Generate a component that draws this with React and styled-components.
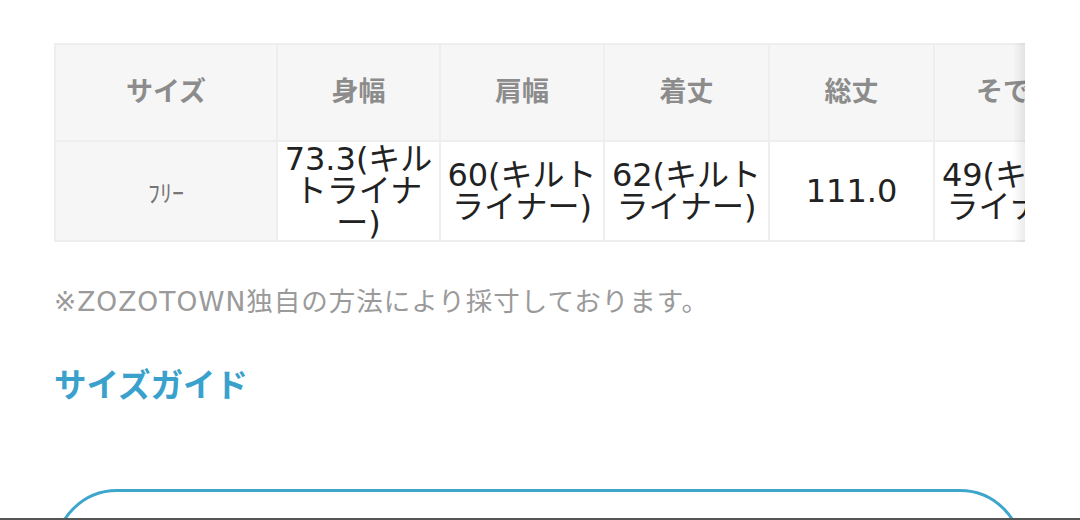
import React from "react";
import styled, { createGlobalStyle } from "styled-components";

const GlobalStyle = createGlobalStyle`
  html, body {
    margin: 0;
    padding: 0;
    background: #fff;
    font-family: "Noto Sans CJK JP", "Noto Sans", sans-serif;
    overflow: hidden;
  }
`;

const Page = styled.div`
  padding: 43px 53px 0 54px;
`;

const ScrollArea = styled.div`
  position: relative;
  width: 971px;
  overflow: hidden;
  &::after {
    content: "";
    position: absolute;
    top: 0;
    right: 0;
    bottom: 0;
    width: 12px;
    background: linear-gradient(to right, rgba(0, 0, 0, 0), rgba(0, 0, 0, 0.08));
  }
`;

const Table = styled.table`
  border-collapse: separate;
  border-spacing: 2px;
  background: #eeeeee;
  table-layout: fixed;
  width: 1046px;
`;

const HeadCell = styled.th`
  width: ${(p) => p.$w}px;
  height: 95px;
  background: #f6f6f6;
  color: #8c8c8c;
  font-size: 27px;
  font-weight: 700;
  text-align: center;
  padding: 0 0 6px;
  box-sizing: border-box;
`;

const SizeCell = styled.td`
  background: #f6f6f6;
  color: #777;
  font-size: 24px;
  text-align: center;
  height: 98px;
  padding: 0;
`;

const ValueCell = styled.td`
  background: #fff;
  color: #222;
  font-family: "DejaVu Sans", "Noto Sans CJK JP", sans-serif;
  font-size: 32px;
  line-height: 32px;
  text-align: center;
  padding: 0 3px;
  word-break: break-all;
`;

const Note = styled.p`
  margin: 42px 0 0;
  color: #9a9a9a;
  font-family: "DejaVu Sans", "Noto Sans CJK JP", sans-serif;
  font-size: 26.5px;
  letter-spacing: 1px;
  line-height: 36px;
`;

const GuideLink = styled.a`
  display: block;
  margin-top: 43px;
  color: #39a1cc;
  font-size: 32.5px;
  font-weight: 700;
  line-height: 40px;
  text-decoration: none;
`;

const OutlineButton = styled.div`
  margin-top: 86px;
  width: 963px;
  height: 120px;
  border: 3px solid #3ea6ca;
  border-radius: 64px;
`;

const BottomEdge = styled.div`
  position: fixed;
  left: 0;
  right: 0;
  bottom: 0;
  height: 2px;
  background: #555;
`;

const columns = [
  { label: "サイズ", w: 220 },
  { label: "身幅", w: 161 },
  { label: "肩幅", w: 162 },
  { label: "着丈", w: 163 },
  { label: "総丈", w: 163 },
  { label: "そで丈", w: 163 },
];

const values = [
  "73.3(キルトライナー)",
  "60(キルトライナー)",
  "62(キルトライナー)",
  "111.0",
  "49(キルトライナー)",
];

const App = () => {
  return (
    <Page>
      <GlobalStyle />
      <ScrollArea>
        <Table>
          <thead>
            <tr>
              {columns.map((c) => (
                <HeadCell key={c.label} $w={c.w}>
                  {c.label}
                </HeadCell>
              ))}
            </tr>
          </thead>
          <tbody>
            <tr>
              <SizeCell>ﾌﾘｰ</SizeCell>
              {values.map((v, i) => (
                <ValueCell key={i}>{v}</ValueCell>
              ))}
            </tr>
          </tbody>
        </Table>
      </ScrollArea>
      <Note>※ZOZOTOWN独自の方法により採寸しております。</Note>
      <GuideLink href="#">サイズガイド</GuideLink>
      <OutlineButton />
      <BottomEdge />
    </Page>
  );
};

export default App;
